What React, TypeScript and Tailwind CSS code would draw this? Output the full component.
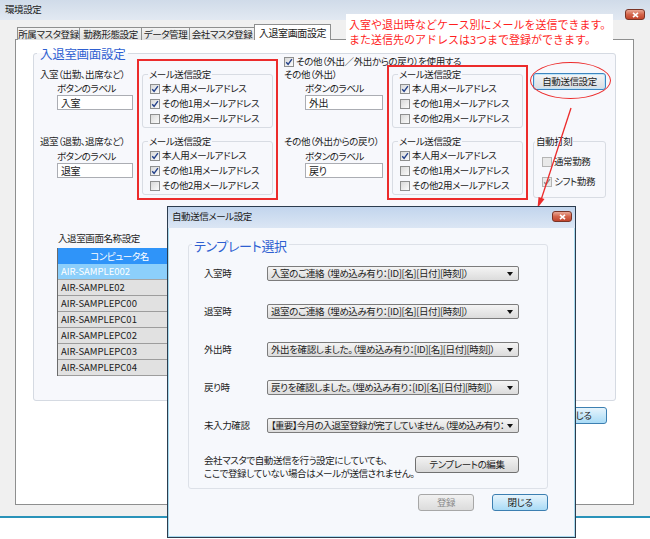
import React from "react";

function Check({ on, off }: { on?: boolean; off?: boolean }) {
  return (
    <span
      className={
        off
          ? "flex h-[10px] w-[10px] shrink-0 items-center justify-center border border-[#b4b4b4] bg-[#e9e9e9]"
          : "flex h-[10px] w-[10px] shrink-0 items-center justify-center border border-[#8e8f8f] bg-linear-to-br from-[#d9d9d9] to-[#fbfbfb]"
      }
    >
      {on && (
        <svg width="8" height="8" viewBox="0 0 8 8">
          <path d="M1.2 4.3 3.1 6.3 6.9 1.2" fill="none" stroke={off ? "#8c8c8c" : "#24418a"} strokeWidth="1.4" />
        </svg>
      )}
    </span>
  );
}

function CheckRow({ label, on, off }: { label: string; on?: boolean; off?: boolean }) {
  return (
    <div className="flex h-[15px] items-center gap-[2px] whitespace-nowrap">
      <Check on={on} off={off} />
      <span className="leading-[13px]">{label}</span>
    </div>
  );
}

function MailGroup({ a, b, c }: { a?: boolean; b?: boolean; c?: boolean }) {
  return (
    <fieldset className="rounded-[3px] border border-[#d8dce3]">
      <legend className="ml-[5px] px-[1px] leading-[13px]">メール送信設定</legend>
      <div className="px-[7px] pb-[1px]">
        <CheckRow label="本人用メールアドレス" on={a} />
        <CheckRow label="その他1用メールアドレス" on={b} />
        <CheckRow label="その他2用メールアドレス" on={c} />
      </div>
    </fieldset>
  );
}

function TextBox({ value }: { value: string }) {
  return (
    <div className="h-[15px] border border-[#abadb3] bg-white pl-[3px] text-[10px] leading-[13px]">{value}</div>
  );
}

function CloseBtn() {
  return (
    <div className="flex h-[11px] w-[20px] items-center justify-center rounded-[3px] border border-[#7a3426] bg-linear-to-b from-[#e9a795] via-[#d3654c] to-[#c1442c]">
      <svg width="7" height="6" viewBox="0 0 7 6">
        <path d="M1 0.8 6 5.2 M6 0.8 1 5.2" stroke="#fff" strokeWidth="1.6" />
      </svg>
    </div>
  );
}

function Select({ text, tight }: { text: string; tight?: boolean }) {
  return (
    <div className="flex h-[15px] w-[252px] items-center justify-between rounded-[2px] border border-[#7c7c7c] bg-linear-to-b from-[#f4f4f4] to-[#dcdcdc] pl-[3px] pr-[5px]">
      <span className={tight ? "overflow-hidden whitespace-nowrap leading-[13px] tracking-[-0.7px]" : "overflow-hidden whitespace-nowrap leading-[13px]"}>{text}</span>
      <svg width="6" height="4" viewBox="0 0 6 4" className="ml-[3px] shrink-0">
        <path d="M0 0h6L3 4z" fill="#111" />
      </svg>
    </div>
  );
}

const computers = [
  "AIR-SAMPLE02",
  "AIR-SAMPLEPC00",
  "AIR-SAMPLEPC01",
  "AIR-SAMPLEPC02",
  "AIR-SAMPLEPC03",
  "AIR-SAMPLEPC04",
];

const templates = [
  ["入室時", "入室のご連絡 （埋め込み有り：[ID][名][日付][時刻]）"],
  ["退室時", "退室のご連絡 （埋め込み有り：[ID][名][日付][時刻]）"],
  ["外出時", "外出を確認しました。（埋め込み有り：[ID][名][日付][時刻]）"],
  ["戻り時", "戻りを確認しました。（埋め込み有り：[ID][名][日付][時刻]）"],
  ["未入力確認", "【重要】今月の入退室登録が完了していません。（埋め込み有り："],
];

export default function App() {
  return (
    <div className="relative h-[539px] w-[650px] overflow-hidden bg-white font-['Noto_Sans_CJK_JP',sans-serif] text-[9.5px] tracking-[-0.4px] text-[#1b1b1b] [font-feature-settings:'palt']">
      {/* main window */}
      <div className="flex h-[518px] flex-col border-b-2 border-[#2a93b9] bg-[#f0f0f0]">
        <div className="flex h-[20px] shrink-0 items-start justify-between bg-linear-to-b from-[#d0dbe9] to-[#e2e9f2] pl-[5px] pr-[5px]">
          <span className="mt-[3px] leading-[13px]">環境設定</span>
          <div className="mt-[9px]">
            <CloseBtn />
          </div>
        </div>

        <div className="flex flex-1 flex-col pb-[11px] pl-[15px] pr-[16px] pt-[4px]">
          {/* tabs */}
          <div className="relative z-10 flex h-[16px] items-end pl-[2px]">
            <div className="h-[13px] w-[63px] border border-b-0 border-[#8e8f8f] bg-linear-to-b from-[#f4f4f4] to-[#e0e0e0] text-center leading-[12px]">所属マスタ登録</div>
            <div className="-ml-[1px] h-[13px] w-[63px] border border-b-0 border-[#8e8f8f] bg-linear-to-b from-[#f4f4f4] to-[#e0e0e0] text-center leading-[12px]">勤務形態設定</div>
            <div className="-ml-[1px] h-[13px] w-[49px] border border-b-0 border-[#8e8f8f] bg-linear-to-b from-[#f4f4f4] to-[#e0e0e0] text-center leading-[12px]">データ管理</div>
            <div className="-ml-[1px] h-[13px] w-[66px] border border-b-0 border-[#8e8f8f] bg-linear-to-b from-[#f4f4f4] to-[#e0e0e0] text-center leading-[12px]">会社マスタ登録</div>
            <div className="-ml-[1px] h-[16px] w-[77px] border border-b-0 border-[#8e8f8f] bg-white text-center text-[10px] leading-[15px]">入退室画面設定</div>
          </div>

          {/* tab panel */}
          <div className="-mt-[1px] flex flex-1 flex-col border border-[#8e8f8f] bg-white">
            <fieldset className="mx-[17px] mt-[7px] rounded-[3px] border border-[#d5dae2] bg-[#f7f8fc] pb-[24px]">
              <legend className="ml-[3px] px-[3px] text-[12.5px] leading-[13px] tracking-[-0.3px] text-[#2e5fd1]">入退室画面設定</legend>

              <div className="-mt-[5px] flex items-start">
                {/* column 1 */}
                <div className="ml-[6px] w-[97px] shrink-0 pt-[13px]">
                  <div className="h-[13px] whitespace-nowrap leading-[13px]">入室（出勤、出席など）</div>
                  <div className="ml-[17px] mt-[1px] h-[13px] leading-[13px]">ボタンのラベル</div>
                  <div className="ml-[17px] w-[76px]">
                    <TextBox value="入室" />
                  </div>
                  <div className="mt-[25px] h-[13px] whitespace-nowrap leading-[13px]">退室（退勤、退席など）</div>
                  <div className="ml-[17px] mt-[2px] h-[13px] leading-[13px]">ボタンのラベル</div>
                  <div className="ml-[17px] w-[76px]">
                    <TextBox value="退室" />
                  </div>
                </div>

                {/* red box 1 */}
                <div className="mt-[4px] flex h-[141px] w-[141px] shrink-0 flex-col gap-[7px] border-2 border-[#ec2b2b] px-[3px] pt-[7px]">
                  <MailGroup a b />
                  <MailGroup a b />
                </div>

                {/* column 3 */}
                <div className="ml-[6px] w-[103px] shrink-0">
                  <div className="flex h-[13px] items-center gap-[2px] whitespace-nowrap">
                    <Check on />
                    <span className="leading-[13px]">その他（外出／外出からの戻り）を使用する</span>
                  </div>
                  <div className="h-[13px] whitespace-nowrap leading-[13px]">その他（外出）</div>
                  <div className="ml-[21px] mt-[1px] h-[13px] leading-[13px]">ボタンのラベル</div>
                  <div className="ml-[21px] w-[78px]">
                    <TextBox value="外出" />
                  </div>
                  <div className="mt-[25px] h-[13px] whitespace-nowrap leading-[13px]">その他（外出からの戻り）</div>
                  <div className="ml-[21px] mt-[2px] h-[13px] leading-[13px]">ボタンのラベル</div>
                  <div className="ml-[21px] w-[78px]">
                    <TextBox value="戻り" />
                  </div>
                </div>

                {/* red box 2 */}
                <div className="mt-[10px] flex h-[135px] w-[141px] shrink-0 flex-col gap-[7px] border-2 border-[#ec2b2b] px-[3px] pt-[1px]">
                  <MailGroup a />
                  <MailGroup a />
                </div>

                {/* column 5 */}
                <div className="ml-[5px] w-[73px] shrink-0">
                  <div className="mt-[18px] flex h-[17px] items-center justify-center rounded-[3px] border border-[#3d85bf] bg-linear-to-b from-[#f3f5f7] to-[#d9dee3] leading-[13px] shadow-[inset_0_0_0_1px_#bfe4f8]">
                    自動送信設定
                  </div>
                  <fieldset className="mt-[45px] rounded-[3px] border border-[#d8dce3]">
                    <legend className="ml-[1px] px-[1px] leading-[13px]">自動打刻</legend>
                    <div className="pb-[8px] pl-[8px]">
                      <div className="mt-[6px]">
                        <CheckRow label="通常勤務" off />
                      </div>
                      <div className="mt-[5px]">
                        <CheckRow label="シフト勤務" on off />
                      </div>
                    </div>
                  </fieldset>
                </div>
              </div>

              <div className="ml-[24px] mt-[32px] h-[13px] leading-[13px]">入退室画面名称設定</div>
              <div className="ml-[23px] mt-[3px] w-[134px] border-l border-[#6b6b6b]">
                <div className="h-[16px] bg-[#2f94f9] pr-[10px] text-center leading-[16px] text-white">コンピュータ名</div>
                <div className="h-[16px] border-b border-[#a5a5a5] bg-[#8ccffb] pl-[3px] leading-[15px] tracking-[0px] text-white">AIR-SAMPLE002</div>
                {computers.map((c) => (
                  <div key={c} className="h-[16px] border-b border-[#9d9d9d] bg-[#e1e1e1] pl-[3px] leading-[15px] tracking-[0px]">
                    {c}
                  </div>
                ))}
              </div>
            </fieldset>

            <div className="mr-[26px] mt-[6px] flex h-[17px] w-[56px] items-center justify-center self-end rounded-[3px] border border-[#3c7fb1] bg-linear-to-b from-[#e6f4fc] to-[#a9dbf6] leading-[13px]">
              閉じる
            </div>
          </div>
        </div>
      </div>

      {/* note */}
      <div className="absolute left-[346px] top-[14px] h-[33px] w-[267px] bg-white px-[3px] pt-[3px] text-[11px] leading-[15px] tracking-[0px] text-[#ff1f1f] [font-feature-settings:normal]">
        <div className="whitespace-nowrap">入室や退出時などケース別にメールを送信できます。</div>
        <div className="whitespace-nowrap">また送信先のアドレスは3つまで登録ができます。</div>
      </div>

      {/* highlight ring */}
      <div className="absolute left-[530px] top-[62px] h-[37px] w-[81px] rounded-[50%] border-[1.5px] border-[#ec2b2b]" />

      {/* arrow */}
      <svg className="absolute left-[530px] top-[104px]" width="50" height="110" viewBox="0 0 50 110">
        <path d="M41 4 L11 96" stroke="#ec2b2b" strokeWidth="1.3" fill="none" />
        <path d="M7.5 104 L8.5 93 L14.5 95 Z" fill="#ec2b2b" />
      </svg>

      {/* dialog */}
      <div className="absolute left-[167px] top-[206px] flex h-[332px] w-[409px] flex-col border border-[#2c3c4e] bg-[#f6f8fc] shadow-[inset_0_0_0_1px_#a9dbef]">
        <div className="flex h-[21px] shrink-0 items-start justify-between bg-linear-to-b from-[#c2d5ed] to-[#dbe6f4] pl-[4px] pr-[3px]">
          <span className="mt-[3px] leading-[13px]">自動送信メール設定</span>
          <div className="mt-[4px]">
            <CloseBtn />
          </div>
        </div>

        <fieldset className="ml-[20px] mr-[27px] mt-[6px] rounded-[3px] border border-[#dde1e8]">
          <legend className="ml-[3px] px-[2px] pt-[4px] text-[13px] leading-[16px] tracking-[-0.3px] text-[#2e5fd1]">テンプレート選択</legend>
          <div className="pb-[8px] pl-[15px]">
            <div className="mt-[12px] flex flex-col gap-[23px]">
              {templates.map(([label, text], i) => (
                <div key={label} className="flex h-[15px] items-center">
                  <span className="w-[63px] shrink-0 leading-[13px]">{label}</span>
                  <Select text={text} tight={i === 4} />
                </div>
              ))}
            </div>
            <div className="mt-[21px] flex items-start">
              <div className="w-[211px] leading-[13px]">
                <div className="whitespace-nowrap">会社マスタで自動送信を行う設定にしていても、</div>
                <div className="whitespace-nowrap">ここで登録していない場合はメールが送信されません。</div>
              </div>
              <div className="mt-[2px] flex h-[17px] w-[104px] items-center justify-center rounded-[3px] border border-[#707070] bg-linear-to-b from-[#f3f3f3] to-[#d8d8d8] leading-[13px]">
                テンプレートの編集
              </div>
            </div>
          </div>
        </fieldset>

        <div className="mr-[27px] mt-[5px] flex justify-end gap-[18px]">
          <div className="flex h-[17px] w-[56px] items-center justify-center rounded-[3px] border border-[#a7a7a7] bg-linear-to-b from-[#f1f1f1] to-[#dcdcdc] leading-[13px] text-[#8a8a8a]">
            登録
          </div>
          <div className="flex h-[17px] w-[56px] items-center justify-center rounded-[3px] border border-[#3c7fb1] bg-linear-to-b from-[#e6f4fc] to-[#a9dbf6] leading-[13px]">
            閉じる
          </div>
        </div>
      </div>
    </div>
  );
}
